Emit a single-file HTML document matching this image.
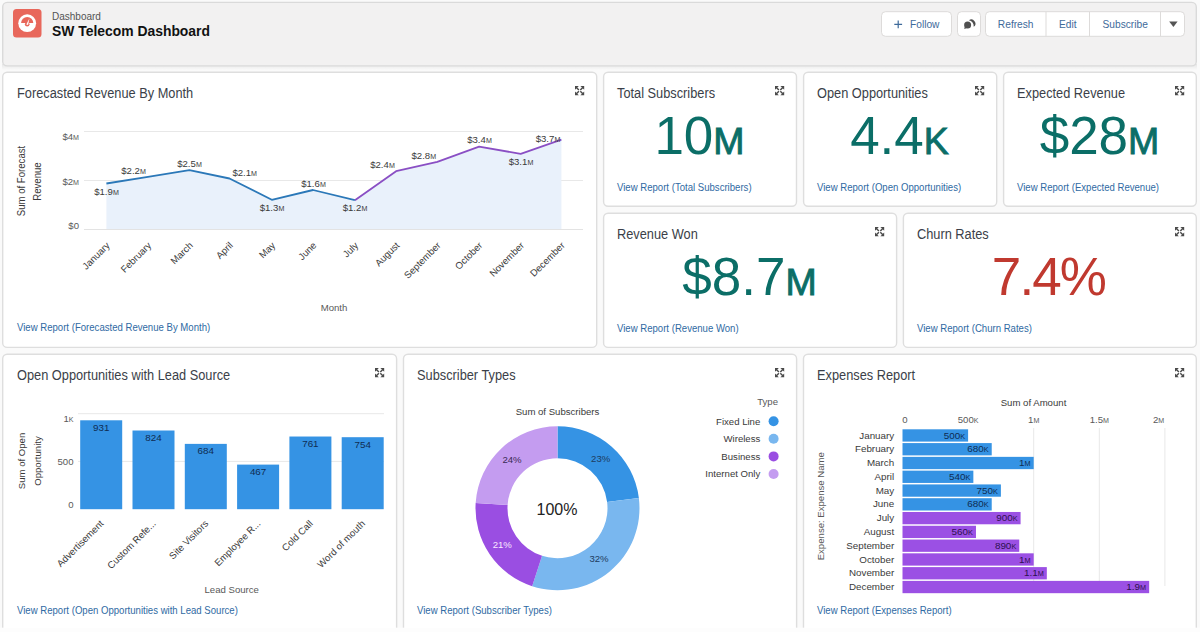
<!DOCTYPE html>
<html><head><meta charset="utf-8"><title>SW Telecom Dashboard</title>
<style>html,body{margin:0;padding:0;background:#fff;width:1200px;height:632px;overflow:hidden}svg text{font-family:"Liberation Sans", sans-serif}</style>
</head><body>
<svg width="1200" height="632" viewBox="0 0 1200 632" style="display:block;font-family:'Liberation Sans', sans-serif"><rect width="1200" height="632" fill="#fafafa"/><defs><linearGradient id="sh" x1="0" y1="0" x2="0" y2="1"><stop offset="0" stop-color="#e6e6e6"/><stop offset="1" stop-color="#fafafa"/></linearGradient></defs><rect x="2" y="64" width="1195" height="6" fill="url(#sh)"/><rect x="2.7" y="2.4" width="1193.60" height="63.50" rx="4.5" ry="4.5" fill="#f2f1f1" stroke="#dadada" stroke-width="1.4"/><rect x="13" y="9" width="28.5" height="28.5" rx="3.5" fill="#e8675b"/><circle cx="27.2" cy="23.2" r="8.9" fill="#fff"/><path d="M21.1 23 A6.1 6.1 0 0 1 33.3 23 Z" fill="#e8675b"/><circle cx="27.2" cy="24.2" r="2.3" fill="#e8675b"/><path d="M26.3 24.4 L29.4 18.4 L28.1 24.9 Z" fill="#fff"/><text x="52" y="20.4" font-size="10" fill="#545454" text-anchor="start" >Dashboard</text><text x="52" y="35.7" font-size="13.9" fill="#111" text-anchor="start" font-weight="700" >SW Telecom Dashboard</text><rect x="881.5" y="11.7" width="70" height="24.599999999999998" rx="4" fill="#fff" stroke="#dddbda"/><path d="M898.2 20.6V28.3M894.3 24.45H902.1" stroke="#3e6a9a" stroke-width="1.2"/><text x="910" y="28" font-size="10.2" fill="#3e6a9a" text-anchor="start" >Follow</text><rect x="957.5" y="11.7" width="23" height="24.599999999999998" rx="4" fill="#fff" stroke="#dddbda"/><g fill="#4f4f4f"><circle cx="967.6" cy="24.9" r="3.5"/><path d="M964.8 26.9 L964.1 28.9 L966.9 28.1Z"/><path d="M968.9 20.3 A3.9 3.9 0 0 1 973.7 26.8 A6 6 0 0 0 968.9 20.3Z"/></g><rect x="985.5" y="11.7" width="199" height="24.599999999999998" rx="4" fill="#fff" stroke="#dddbda"/><path d="M1046 11.7V36.3M1089.5 11.7V36.3M1160.5 11.7V36.3" stroke="#dddbda" stroke-width="1"/><text x="1015.7" y="28" font-size="10.2" fill="#3e6a9a" text-anchor="middle" >Refresh</text><text x="1067.8" y="28" font-size="10.2" fill="#3e6a9a" text-anchor="middle" >Edit</text><text x="1125.2" y="28" font-size="10.2" fill="#3e6a9a" text-anchor="middle" >Subscribe</text><path d="M1169.2 21.6H1177.6L1173.4 26.9Z" fill="#555"/><rect x="2.7" y="72.3" width="594.00" height="275.10" rx="4.5" ry="4.5" fill="#fff" stroke="#dedede" stroke-width="1.4"/><rect x="603.6" y="72.3" width="192.90" height="134.00" rx="4.5" ry="4.5" fill="#fff" stroke="#dedede" stroke-width="1.4"/><rect x="803.6" y="72.3" width="193.10" height="134.00" rx="4.5" ry="4.5" fill="#fff" stroke="#dedede" stroke-width="1.4"/><rect x="1003.6" y="72.3" width="192.70" height="134.00" rx="4.5" ry="4.5" fill="#fff" stroke="#dedede" stroke-width="1.4"/><rect x="603.6" y="213.3" width="293.00" height="134.10" rx="4.5" ry="4.5" fill="#fff" stroke="#dedede" stroke-width="1.4"/><rect x="903.4" y="213.3" width="292.90" height="134.10" rx="4.5" ry="4.5" fill="#fff" stroke="#dedede" stroke-width="1.4"/><rect x="2.7" y="354.2" width="393.90" height="305.80" rx="4.5" ry="4.5" fill="#fff" stroke="#dedede" stroke-width="1.4"/><rect x="403.5" y="354.2" width="393.10" height="305.80" rx="4.5" ry="4.5" fill="#fff" stroke="#dedede" stroke-width="1.4"/><rect x="803.5" y="354.2" width="392.80" height="305.80" rx="4.5" ry="4.5" fill="#fff" stroke="#dedede" stroke-width="1.4"/><text transform="translate(17,97.8) scale(1,1.1)" font-size="12.8" fill="#3b3f49" text-anchor="start" >Forecasted Revenue By Month</text><g transform="translate(575,86)" fill="#4a4a4a"><g transform="rotate(0 4.6 4.6)"><path d="M0 0H3.8L0 3.8Z"/><path d="M1.4 1.4L3.9 3.9" stroke="#4a4a4a" stroke-width="1.4"/></g><g transform="rotate(90 4.6 4.6)"><path d="M0 0H3.8L0 3.8Z"/><path d="M1.4 1.4L3.9 3.9" stroke="#4a4a4a" stroke-width="1.4"/></g><g transform="rotate(180 4.6 4.6)"><path d="M0 0H3.8L0 3.8Z"/><path d="M1.4 1.4L3.9 3.9" stroke="#4a4a4a" stroke-width="1.4"/></g><g transform="rotate(270 4.6 4.6)"><path d="M0 0H3.8L0 3.8Z"/><path d="M1.4 1.4L3.9 3.9" stroke="#4a4a4a" stroke-width="1.4"/></g></g><text transform="translate(17,331) scale(1,1.06)" font-size="9.6" fill="#2f6aa3" text-anchor="start" >View Report (Forecasted Revenue By Month)</text><text transform="translate(617,98) scale(1,1.1)" font-size="12.8" fill="#3b3f49" text-anchor="start" >Total Subscribers</text><g transform="translate(775,86)" fill="#4a4a4a"><g transform="rotate(0 4.6 4.6)"><path d="M0 0H3.8L0 3.8Z"/><path d="M1.4 1.4L3.9 3.9" stroke="#4a4a4a" stroke-width="1.4"/></g><g transform="rotate(90 4.6 4.6)"><path d="M0 0H3.8L0 3.8Z"/><path d="M1.4 1.4L3.9 3.9" stroke="#4a4a4a" stroke-width="1.4"/></g><g transform="rotate(180 4.6 4.6)"><path d="M0 0H3.8L0 3.8Z"/><path d="M1.4 1.4L3.9 3.9" stroke="#4a4a4a" stroke-width="1.4"/></g><g transform="rotate(270 4.6 4.6)"><path d="M0 0H3.8L0 3.8Z"/><path d="M1.4 1.4L3.9 3.9" stroke="#4a4a4a" stroke-width="1.4"/></g></g><text x="699.5" y="153.8" font-size="53" fill="#0b6e67" text-anchor="middle" style="color:#0b6e67" letter-spacing="0">10<tspan font-size="37.5" stroke="currentColor" stroke-width="0.9">M</tspan></text><text transform="translate(617,191) scale(1,1.06)" font-size="9.6" fill="#2f6aa3" text-anchor="start" >View Report (Total Subscribers)</text><text transform="translate(817,98) scale(1,1.1)" font-size="12.8" fill="#3b3f49" text-anchor="start" >Open Opportunities</text><g transform="translate(975,86)" fill="#4a4a4a"><g transform="rotate(0 4.6 4.6)"><path d="M0 0H3.8L0 3.8Z"/><path d="M1.4 1.4L3.9 3.9" stroke="#4a4a4a" stroke-width="1.4"/></g><g transform="rotate(90 4.6 4.6)"><path d="M0 0H3.8L0 3.8Z"/><path d="M1.4 1.4L3.9 3.9" stroke="#4a4a4a" stroke-width="1.4"/></g><g transform="rotate(180 4.6 4.6)"><path d="M0 0H3.8L0 3.8Z"/><path d="M1.4 1.4L3.9 3.9" stroke="#4a4a4a" stroke-width="1.4"/></g><g transform="rotate(270 4.6 4.6)"><path d="M0 0H3.8L0 3.8Z"/><path d="M1.4 1.4L3.9 3.9" stroke="#4a4a4a" stroke-width="1.4"/></g></g><text x="899.5" y="153.8" font-size="53" fill="#0b6e67" text-anchor="middle" style="color:#0b6e67" letter-spacing="0">4.4<tspan font-size="37.5" stroke="currentColor" stroke-width="0.9">K</tspan></text><text transform="translate(817,191) scale(1,1.06)" font-size="9.6" fill="#2f6aa3" text-anchor="start" >View Report (Open Opportunities)</text><text transform="translate(1017,98) scale(1,1.1)" font-size="12.8" fill="#3b3f49" text-anchor="start" >Expected Revenue</text><g transform="translate(1175,86)" fill="#4a4a4a"><g transform="rotate(0 4.6 4.6)"><path d="M0 0H3.8L0 3.8Z"/><path d="M1.4 1.4L3.9 3.9" stroke="#4a4a4a" stroke-width="1.4"/></g><g transform="rotate(90 4.6 4.6)"><path d="M0 0H3.8L0 3.8Z"/><path d="M1.4 1.4L3.9 3.9" stroke="#4a4a4a" stroke-width="1.4"/></g><g transform="rotate(180 4.6 4.6)"><path d="M0 0H3.8L0 3.8Z"/><path d="M1.4 1.4L3.9 3.9" stroke="#4a4a4a" stroke-width="1.4"/></g><g transform="rotate(270 4.6 4.6)"><path d="M0 0H3.8L0 3.8Z"/><path d="M1.4 1.4L3.9 3.9" stroke="#4a4a4a" stroke-width="1.4"/></g></g><text x="1099.5" y="153.8" font-size="53" fill="#0b6e67" text-anchor="middle" style="color:#0b6e67" letter-spacing="0">$28<tspan font-size="37.5" stroke="currentColor" stroke-width="0.9">M</tspan></text><text transform="translate(1017,191) scale(1,1.06)" font-size="9.6" fill="#2f6aa3" text-anchor="start" >View Report (Expected Revenue)</text><text transform="translate(617,239) scale(1,1.1)" font-size="12.8" fill="#3b3f49" text-anchor="start" >Revenue Won</text><g transform="translate(875,227)" fill="#4a4a4a"><g transform="rotate(0 4.6 4.6)"><path d="M0 0H3.8L0 3.8Z"/><path d="M1.4 1.4L3.9 3.9" stroke="#4a4a4a" stroke-width="1.4"/></g><g transform="rotate(90 4.6 4.6)"><path d="M0 0H3.8L0 3.8Z"/><path d="M1.4 1.4L3.9 3.9" stroke="#4a4a4a" stroke-width="1.4"/></g><g transform="rotate(180 4.6 4.6)"><path d="M0 0H3.8L0 3.8Z"/><path d="M1.4 1.4L3.9 3.9" stroke="#4a4a4a" stroke-width="1.4"/></g><g transform="rotate(270 4.6 4.6)"><path d="M0 0H3.8L0 3.8Z"/><path d="M1.4 1.4L3.9 3.9" stroke="#4a4a4a" stroke-width="1.4"/></g></g><text x="749.5" y="294.8" font-size="53" fill="#0b6e67" text-anchor="middle" style="color:#0b6e67" letter-spacing="0">$8.7<tspan font-size="37.5" stroke="currentColor" stroke-width="0.9">M</tspan></text><text transform="translate(617,332) scale(1,1.06)" font-size="9.6" fill="#2f6aa3" text-anchor="start" >View Report (Revenue Won)</text><text transform="translate(917,239) scale(1,1.1)" font-size="12.8" fill="#3b3f49" text-anchor="start" >Churn Rates</text><g transform="translate(1175,227)" fill="#4a4a4a"><g transform="rotate(0 4.6 4.6)"><path d="M0 0H3.8L0 3.8Z"/><path d="M1.4 1.4L3.9 3.9" stroke="#4a4a4a" stroke-width="1.4"/></g><g transform="rotate(90 4.6 4.6)"><path d="M0 0H3.8L0 3.8Z"/><path d="M1.4 1.4L3.9 3.9" stroke="#4a4a4a" stroke-width="1.4"/></g><g transform="rotate(180 4.6 4.6)"><path d="M0 0H3.8L0 3.8Z"/><path d="M1.4 1.4L3.9 3.9" stroke="#4a4a4a" stroke-width="1.4"/></g><g transform="rotate(270 4.6 4.6)"><path d="M0 0H3.8L0 3.8Z"/><path d="M1.4 1.4L3.9 3.9" stroke="#4a4a4a" stroke-width="1.4"/></g></g><text x="1048.45" y="294.8" font-size="53" fill="#c0392f" text-anchor="middle" style="color:#c0392f" letter-spacing="-1.9">7.4%</text><text transform="translate(917,332) scale(1,1.06)" font-size="9.6" fill="#2f6aa3" text-anchor="start" >View Report (Churn Rates)</text><text transform="translate(17,380) scale(1,1.1)" font-size="12.8" fill="#3b3f49" text-anchor="start" >Open Opportunities with Lead Source</text><g transform="translate(375,368)" fill="#4a4a4a"><g transform="rotate(0 4.6 4.6)"><path d="M0 0H3.8L0 3.8Z"/><path d="M1.4 1.4L3.9 3.9" stroke="#4a4a4a" stroke-width="1.4"/></g><g transform="rotate(90 4.6 4.6)"><path d="M0 0H3.8L0 3.8Z"/><path d="M1.4 1.4L3.9 3.9" stroke="#4a4a4a" stroke-width="1.4"/></g><g transform="rotate(180 4.6 4.6)"><path d="M0 0H3.8L0 3.8Z"/><path d="M1.4 1.4L3.9 3.9" stroke="#4a4a4a" stroke-width="1.4"/></g><g transform="rotate(270 4.6 4.6)"><path d="M0 0H3.8L0 3.8Z"/><path d="M1.4 1.4L3.9 3.9" stroke="#4a4a4a" stroke-width="1.4"/></g></g><text transform="translate(17,613.5) scale(1,1.06)" font-size="9.6" fill="#2f6aa3" text-anchor="start" >View Report (Open Opportunities with Lead Source)</text><text transform="translate(417,380) scale(1,1.1)" font-size="12.8" fill="#3b3f49" text-anchor="start" >Subscriber Types</text><g transform="translate(775,368)" fill="#4a4a4a"><g transform="rotate(0 4.6 4.6)"><path d="M0 0H3.8L0 3.8Z"/><path d="M1.4 1.4L3.9 3.9" stroke="#4a4a4a" stroke-width="1.4"/></g><g transform="rotate(90 4.6 4.6)"><path d="M0 0H3.8L0 3.8Z"/><path d="M1.4 1.4L3.9 3.9" stroke="#4a4a4a" stroke-width="1.4"/></g><g transform="rotate(180 4.6 4.6)"><path d="M0 0H3.8L0 3.8Z"/><path d="M1.4 1.4L3.9 3.9" stroke="#4a4a4a" stroke-width="1.4"/></g><g transform="rotate(270 4.6 4.6)"><path d="M0 0H3.8L0 3.8Z"/><path d="M1.4 1.4L3.9 3.9" stroke="#4a4a4a" stroke-width="1.4"/></g></g><text transform="translate(417,613.5) scale(1,1.06)" font-size="9.6" fill="#2f6aa3" text-anchor="start" >View Report (Subscriber Types)</text><text transform="translate(817,380) scale(1,1.1)" font-size="12.8" fill="#3b3f49" text-anchor="start" >Expenses Report</text><g transform="translate(1175,368)" fill="#4a4a4a"><g transform="rotate(0 4.6 4.6)"><path d="M0 0H3.8L0 3.8Z"/><path d="M1.4 1.4L3.9 3.9" stroke="#4a4a4a" stroke-width="1.4"/></g><g transform="rotate(90 4.6 4.6)"><path d="M0 0H3.8L0 3.8Z"/><path d="M1.4 1.4L3.9 3.9" stroke="#4a4a4a" stroke-width="1.4"/></g><g transform="rotate(180 4.6 4.6)"><path d="M0 0H3.8L0 3.8Z"/><path d="M1.4 1.4L3.9 3.9" stroke="#4a4a4a" stroke-width="1.4"/></g><g transform="rotate(270 4.6 4.6)"><path d="M0 0H3.8L0 3.8Z"/><path d="M1.4 1.4L3.9 3.9" stroke="#4a4a4a" stroke-width="1.4"/></g></g><text transform="translate(817,613.5) scale(1,1.06)" font-size="9.6" fill="#2f6aa3" text-anchor="start" >View Report (Expenses Report)</text><path d="M84 131.5H583" stroke="#e8e8e8" stroke-width="1"/><path d="M84 180.5H583" stroke="#e8e8e8" stroke-width="1"/><path d="M84 229.5H583" stroke="#e8e8e8" stroke-width="1"/><path d="M106.4,229.5 L106.4,183.5 147.9,176.8 189.4,170.1 229.5,178.5 271.8,199.8 313,190 354.9,200.2 396.1,171.2 437.3,161.8 479.1,146.7 520.7,153.8 561.4,139.7 L561.4,229.5 Z" fill="#e9f1fb"/><path d="M84 229.5H583" stroke="#e3e3e3" stroke-width="1"/><polyline points="106.4,183.5 147.9,176.8 189.4,170.1 229.5,178.5 271.8,199.8 313,190 354.9,200.2" fill="none" stroke="#2b78b8" stroke-width="1.8" stroke-linejoin="round"/><polyline points="354.9,200.2 396.1,171.2 437.3,161.8 479.1,146.7 520.7,153.8 561.4,139.7" fill="none" stroke="#8a4fc4" stroke-width="1.8" stroke-linejoin="round"/><text x="79" y="139.6" font-size="9.6" fill="#595959" text-anchor="end" >$4<tspan font-size="0.74em">M</tspan></text><text x="79" y="184.6" font-size="9.6" fill="#595959" text-anchor="end" >$2<tspan font-size="0.74em">M</tspan></text><text x="79" y="228.6" font-size="9.6" fill="#595959" text-anchor="end" >$0</text><text x="106.5" y="194.8" font-size="9.6" fill="#3a3a3a" text-anchor="middle" >$1.9<tspan font-size="0.74em">M</tspan></text><text x="133.6" y="174.4" font-size="9.6" fill="#3a3a3a" text-anchor="middle" >$2.2<tspan font-size="0.74em">M</tspan></text><text x="189.5" y="166.8" font-size="9.6" fill="#3a3a3a" text-anchor="middle" >$2.5<tspan font-size="0.74em">M</tspan></text><text x="244.7" y="175.9" font-size="9.6" fill="#3a3a3a" text-anchor="middle" >$2.1<tspan font-size="0.74em">M</tspan></text><text x="272" y="210.6" font-size="9.6" fill="#3a3a3a" text-anchor="middle" >$1.3<tspan font-size="0.74em">M</tspan></text><text x="313.5" y="186.8" font-size="9.6" fill="#3a3a3a" text-anchor="middle" >$1.6<tspan font-size="0.74em">M</tspan></text><text x="355" y="211.2" font-size="9.6" fill="#3a3a3a" text-anchor="middle" >$1.2<tspan font-size="0.74em">M</tspan></text><text x="382.5" y="168.3" font-size="9.6" fill="#3a3a3a" text-anchor="middle" >$2.4<tspan font-size="0.74em">M</tspan></text><text x="423.8" y="158.6" font-size="9.6" fill="#3a3a3a" text-anchor="middle" >$2.8<tspan font-size="0.74em">M</tspan></text><text x="479.5" y="143.4" font-size="9.6" fill="#3a3a3a" text-anchor="middle" >$3.4<tspan font-size="0.74em">M</tspan></text><text x="521" y="165.1" font-size="9.6" fill="#3a3a3a" text-anchor="middle" >$3.1<tspan font-size="0.74em">M</tspan></text><text x="548" y="141.9" font-size="9.6" fill="#3a3a3a" text-anchor="middle" >$3.7<tspan font-size="0.74em">M</tspan></text><text transform="translate(110.4,246) rotate(-45)" font-size="9.6" fill="#3a3a3a" text-anchor="end">January</text><text transform="translate(151.9,246) rotate(-45)" font-size="9.6" fill="#3a3a3a" text-anchor="end">February</text><text transform="translate(193.4,246) rotate(-45)" font-size="9.6" fill="#3a3a3a" text-anchor="end">March</text><text transform="translate(233.5,246) rotate(-45)" font-size="9.6" fill="#3a3a3a" text-anchor="end">April</text><text transform="translate(275.8,246) rotate(-45)" font-size="9.6" fill="#3a3a3a" text-anchor="end">May</text><text transform="translate(317,246) rotate(-45)" font-size="9.6" fill="#3a3a3a" text-anchor="end">June</text><text transform="translate(358.9,246) rotate(-45)" font-size="9.6" fill="#3a3a3a" text-anchor="end">July</text><text transform="translate(400.1,246) rotate(-45)" font-size="9.6" fill="#3a3a3a" text-anchor="end">August</text><text transform="translate(441.3,246) rotate(-45)" font-size="9.6" fill="#3a3a3a" text-anchor="end">September</text><text transform="translate(483.1,246) rotate(-45)" font-size="9.6" fill="#3a3a3a" text-anchor="end">October</text><text transform="translate(524.7,246) rotate(-45)" font-size="9.6" fill="#3a3a3a" text-anchor="end">November</text><text transform="translate(565.4,246) rotate(-45)" font-size="9.6" fill="#3a3a3a" text-anchor="end">December</text><text x="334" y="310.7" font-size="9.6" fill="#595959" text-anchor="middle" >Month</text><text transform="translate(25.1,181) rotate(-90) scale(1,1.08)" font-size="9.6" fill="#3a3a3a" text-anchor="middle">Sum of Forecast</text><text transform="translate(40.8,181.5) rotate(-90) scale(1,1.08)" font-size="9.6" fill="#3a3a3a" text-anchor="middle">Revenue</text><path d="M78 413.7H384" stroke="#e8e8e8" stroke-width="1"/><path d="M78 461.4H384" stroke="#e8e8e8" stroke-width="1"/><rect x="80.2" y="420.2895" width="42" height="88.91050000000001" fill="#3593e4"/><text x="101.2" y="430.7895" font-size="9.8" fill="#0f2c52" text-anchor="middle" >931</text><text transform="translate(104.2,524.2) rotate(-45)" font-size="9.6" fill="#3a3a3a" text-anchor="end">Advertisement</text><rect x="132.5" y="430.508" width="42" height="78.69200000000001" fill="#3593e4"/><text x="153.5" y="441.008" font-size="9.8" fill="#0f2c52" text-anchor="middle" >824</text><text transform="translate(156.5,524.2) rotate(-45)" font-size="9.6" fill="#3a3a3a" text-anchor="end">Custom Refe...</text><rect x="184.8" y="443.878" width="42" height="65.322" fill="#3593e4"/><text x="205.8" y="454.378" font-size="9.8" fill="#0f2c52" text-anchor="middle" >684</text><text transform="translate(208.8,524.2) rotate(-45)" font-size="9.6" fill="#3a3a3a" text-anchor="end">Site Visitors</text><rect x="237.09999999999997" y="464.6015" width="42" height="44.5985" fill="#3593e4"/><text x="258.09999999999997" y="475.1015" font-size="9.8" fill="#0f2c52" text-anchor="middle" >467</text><text transform="translate(261.09999999999997,524.2) rotate(-45)" font-size="9.6" fill="#3a3a3a" text-anchor="end">Employee R...</text><rect x="289.4" y="436.5245" width="42" height="72.6755" fill="#3593e4"/><text x="310.4" y="447.0245" font-size="9.8" fill="#0f2c52" text-anchor="middle" >761</text><text transform="translate(313.4,524.2) rotate(-45)" font-size="9.6" fill="#3a3a3a" text-anchor="end">Cold Call</text><rect x="341.7" y="437.193" width="42" height="72.007" fill="#3593e4"/><text x="362.7" y="447.693" font-size="9.8" fill="#0f2c52" text-anchor="middle" >754</text><text transform="translate(365.7,524.2) rotate(-45)" font-size="9.6" fill="#3a3a3a" text-anchor="end">Word of mouth</text><text x="73.5" y="421.8" font-size="9.6" fill="#595959" text-anchor="end" >1<tspan font-size="0.74em">K</tspan></text><text x="73.5" y="464.6" font-size="9.6" fill="#595959" text-anchor="end" >500</text><text x="73.5" y="507.6" font-size="9.6" fill="#595959" text-anchor="end" >0</text><text x="231.7" y="592.8" font-size="9.6" fill="#595959" text-anchor="middle" >Lead Source</text><text transform="translate(25,461) rotate(-90)" font-size="9.6" fill="#3a3a3a" text-anchor="middle">Sum of Open</text><text transform="translate(41.2,461) rotate(-90)" font-size="9.6" fill="#3a3a3a" text-anchor="middle">Opportunity</text><path d="M557.50,426.20 A82,82 0 0 1 638.85,497.92 L607.11,501.93 A50,50 0 0 0 557.50,458.20 Z" fill="#3593e4"/><path d="M638.85,497.92 A82,82 0 0 1 532.16,586.19 L542.05,555.75 A50,50 0 0 0 607.11,501.93 Z" fill="#79b7ef"/><path d="M532.16,586.19 A82,82 0 0 1 475.66,503.05 L507.60,505.06 A50,50 0 0 0 542.05,555.75 Z" fill="#9a4ee2"/><path d="M475.66,503.05 A82,82 0 0 1 557.50,426.20 L557.50,458.20 A50,50 0 0 0 507.60,505.06 Z" fill="#c49cf0"/><text x="557.5" y="415.1" font-size="9.6" fill="#3a3a3a" text-anchor="middle" >Sum of Subscribers</text><text x="557" y="515.1" font-size="16" fill="#222" text-anchor="middle" >100%</text><text x="600.7" y="462.3" font-size="9.6" fill="#1d3c60" text-anchor="middle" >23%</text><text x="599" y="562.3" font-size="9.6" fill="#1d3c60" text-anchor="middle" >32%</text><text x="502.3" y="548.3" font-size="9.6" fill="#fbe9ff" text-anchor="middle" >21%</text><text x="512" y="463.3" font-size="9.6" fill="#3a2a55" text-anchor="middle" >24%</text><text x="778" y="404.6" font-size="9.6" fill="#595959" text-anchor="end" >Type</text><circle cx="773.6" cy="421.2" r="5" fill="#3593e4"/><text x="760.3" y="424.59999999999997" font-size="9.6" fill="#3a3a3a" text-anchor="end" >Fixed Line</text><circle cx="773.6" cy="438.8" r="5" fill="#79b7ef"/><text x="760.3" y="442.2" font-size="9.6" fill="#3a3a3a" text-anchor="end" >Wireless</text><circle cx="773.6" cy="456.4" r="5" fill="#9a4ee2"/><text x="760.3" y="459.79999999999995" font-size="9.6" fill="#3a3a3a" text-anchor="end" >Business</text><circle cx="773.6" cy="474.0" r="5" fill="#c49cf0"/><text x="760.3" y="477.4" font-size="9.6" fill="#3a3a3a" text-anchor="end" >Internet Only</text><path d="M1033.7 428V586" stroke="#e8e8e8" stroke-width="1"/><path d="M1099.3 428V586" stroke="#e8e8e8" stroke-width="1"/><path d="M1164.9 428V586" stroke="#e8e8e8" stroke-width="1"/><text x="1033.5" y="406.1" font-size="9.6" fill="#3a3a3a" text-anchor="middle" >Sum of Amount</text><text x="905" y="423.2" font-size="9.6" fill="#595959" text-anchor="middle" >0</text><text x="968.1" y="423.2" font-size="9.6" fill="#595959" text-anchor="middle" >500<tspan font-size="0.74em">K</tspan></text><text x="1033.7" y="423.2" font-size="9.6" fill="#595959" text-anchor="middle" >1<tspan font-size="0.74em">M</tspan></text><text x="1099.3" y="423.2" font-size="9.6" fill="#595959" text-anchor="middle" >1.5<tspan font-size="0.74em">M</tspan></text><text x="1158.6" y="423.2" font-size="9.6" fill="#595959" text-anchor="middle" >2<tspan font-size="0.74em">M</tspan></text><rect x="902.5" y="429.30" width="65.60" height="12.3" fill="#3593e4"/><text x="965.1" y="438.5" font-size="9.9" fill="#0f2c52" text-anchor="end" >500<tspan font-size="0.74em">K</tspan></text><text x="894.2" y="438.5" font-size="9.8" fill="#3a3a3a" text-anchor="end" >January</text><rect x="902.5" y="443.08" width="89.22" height="12.3" fill="#3593e4"/><text x="988.716" y="452.28" font-size="9.9" fill="#0f2c52" text-anchor="end" >680<tspan font-size="0.74em">K</tspan></text><text x="894.2" y="452.28" font-size="9.8" fill="#3a3a3a" text-anchor="end" >February</text><rect x="902.5" y="456.86" width="131.20" height="12.3" fill="#3593e4"/><text x="1030.7" y="466.06" font-size="9.9" fill="#0f2c52" text-anchor="end" >1<tspan font-size="0.74em">M</tspan></text><text x="894.2" y="466.06" font-size="9.8" fill="#3a3a3a" text-anchor="end" >March</text><rect x="902.5" y="470.64" width="70.85" height="12.3" fill="#3593e4"/><text x="970.348" y="479.84" font-size="9.9" fill="#0f2c52" text-anchor="end" >540<tspan font-size="0.74em">K</tspan></text><text x="894.2" y="479.84" font-size="9.8" fill="#3a3a3a" text-anchor="end" >April</text><rect x="902.5" y="484.42" width="98.40" height="12.3" fill="#3593e4"/><text x="997.9" y="493.62" font-size="9.9" fill="#0f2c52" text-anchor="end" >750<tspan font-size="0.74em">K</tspan></text><text x="894.2" y="493.62" font-size="9.8" fill="#3a3a3a" text-anchor="end" >May</text><rect x="902.5" y="498.20" width="89.22" height="12.3" fill="#3593e4"/><text x="988.716" y="507.4" font-size="9.9" fill="#0f2c52" text-anchor="end" >680<tspan font-size="0.74em">K</tspan></text><text x="894.2" y="507.4" font-size="9.8" fill="#3a3a3a" text-anchor="end" >June</text><rect x="902.5" y="511.98" width="118.08" height="12.3" fill="#9b50e4"/><text x="1017.58" y="521.1800000000001" font-size="9.9" fill="#2e1050" text-anchor="end" >900<tspan font-size="0.74em">K</tspan></text><text x="894.2" y="521.1800000000001" font-size="9.8" fill="#3a3a3a" text-anchor="end" >July</text><rect x="902.5" y="525.76" width="73.47" height="12.3" fill="#9b50e4"/><text x="972.972" y="534.96" font-size="9.9" fill="#2e1050" text-anchor="end" >560<tspan font-size="0.74em">K</tspan></text><text x="894.2" y="534.96" font-size="9.8" fill="#3a3a3a" text-anchor="end" >August</text><rect x="902.5" y="539.54" width="116.77" height="12.3" fill="#9b50e4"/><text x="1016.268" y="548.74" font-size="9.9" fill="#2e1050" text-anchor="end" >890<tspan font-size="0.74em">K</tspan></text><text x="894.2" y="548.74" font-size="9.8" fill="#3a3a3a" text-anchor="end" >September</text><rect x="902.5" y="553.32" width="131.20" height="12.3" fill="#9b50e4"/><text x="1030.7" y="562.5200000000001" font-size="9.9" fill="#2e1050" text-anchor="end" >1<tspan font-size="0.74em">M</tspan></text><text x="894.2" y="562.5200000000001" font-size="9.8" fill="#3a3a3a" text-anchor="end" >October</text><rect x="902.5" y="567.10" width="144.32" height="12.3" fill="#9b50e4"/><text x="1043.82" y="576.3000000000001" font-size="9.9" fill="#2e1050" text-anchor="end" >1.1<tspan font-size="0.74em">M</tspan></text><text x="894.2" y="576.3000000000001" font-size="9.8" fill="#3a3a3a" text-anchor="end" >November</text><rect x="902.5" y="580.88" width="246.66" height="12.3" fill="#9b50e4"/><text x="1146.156" y="590.08" font-size="9.9" fill="#2e1050" text-anchor="end" >1.9<tspan font-size="0.74em">M</tspan></text><text x="894.2" y="590.08" font-size="9.8" fill="#3a3a3a" text-anchor="end" >December</text><text transform="translate(824,506.2) rotate(-90)" font-size="9.6" fill="#595959" text-anchor="middle">Expense: Expense Name</text><rect x="0" y="627.7" width="1200" height="5" fill="#fdfdfd"/></svg>
</body></html>
